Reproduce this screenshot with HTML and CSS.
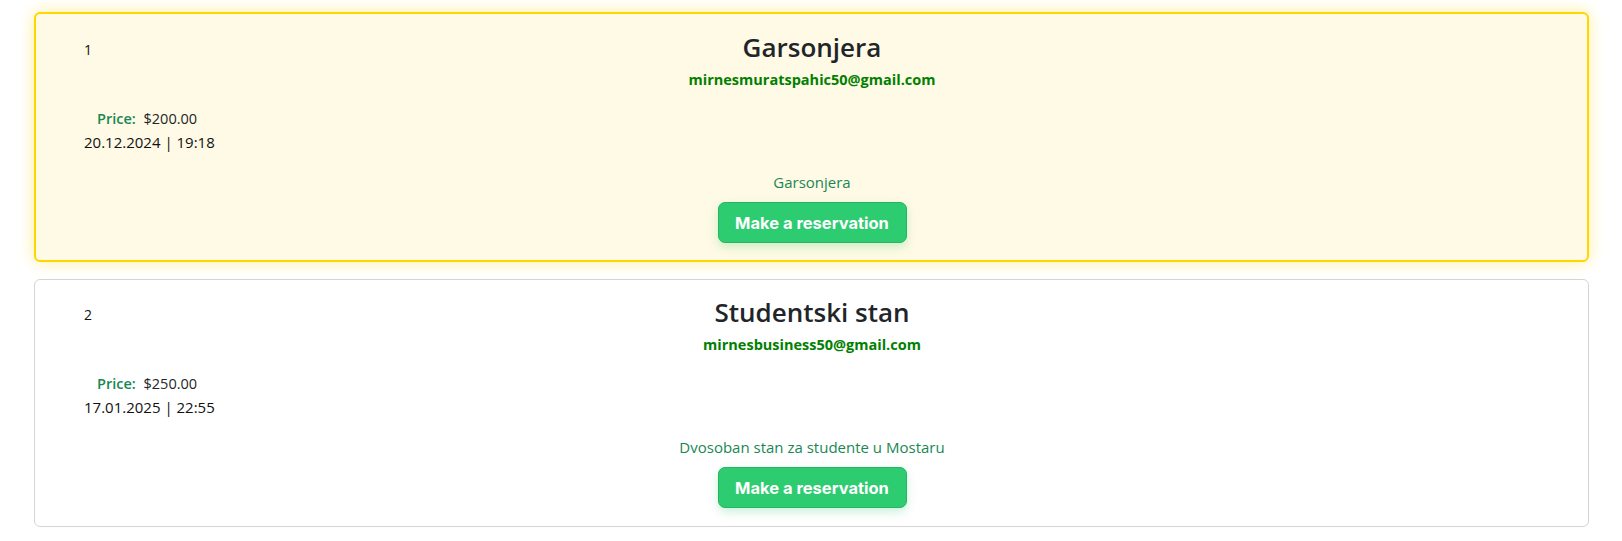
FILE: index.html
```html
<!DOCTYPE html>
<html lang="en">
<head>
<meta charset="utf-8">
<title>Apartments</title>
<link rel="stylesheet" href="styles.css">
</head>
<body>
<main class="list">
  <article class="card card-featured">
    <div class="card-top">
      <span class="num">1</span>
      <div class="heading">
        <h3 class="title">Garsonjera</h3>
        <p class="email">mirnesmuratspahic50@gmail.com</p>
      </div>
      <span class="spacer"></span>
    </div>
    <div class="meta">
      <p class="price"><span class="price-label">Price:</span> $200.00</p>
      <p class="date">20.12.2024 | 19:18</p>
    </div>
    <p class="desc">Garsonjera</p>
    <div class="actions"><button class="btn" type="button">Make a reservation</button></div>
  </article>
  <article class="card">
    <div class="card-top">
      <span class="num">2</span>
      <div class="heading">
        <h3 class="title">Studentski stan</h3>
        <p class="email">mirnesbusiness50@gmail.com</p>
      </div>
      <span class="spacer"></span>
    </div>
    <div class="meta">
      <p class="price"><span class="price-label">Price:</span> $250.00</p>
      <p class="date">17.01.2025 | 22:55</p>
    </div>
    <p class="desc">Dvosoban stan za studente u Mostaru</p>
    <div class="actions"><button class="btn" type="button">Make a reservation</button></div>
  </article>
</main>
</body>
</html>
```

FILE: styles.css
```css
* { box-sizing: border-box; }

html, body {
  margin: 0;
  padding: 0;
  background: #ffffff;
}

body {
  font-family: "Open Sans", "Liberation Sans", sans-serif;
  color: #212529;
  font-size: 15px;
}

p, h3 { margin: 0; }

.list {
  display: flex;
  flex-direction: column;
  gap: 17px;
  padding: 12px 33px 0 34px;
}

.card {
  border: 1px solid #d4d4d4;
  border-radius: 6px;
  background: #ffffff;
  padding: 15px 48px 18px 49px;
  display: flex;
  flex-direction: column;
}

.card-featured {
  border: 2px solid #ffd700;
  background: #fffae5;
  padding: 16px 47px 17px 48px;
  box-shadow: 0 0 16px rgba(255, 215, 0, 0.4);
}

.card-top {
  display: grid;
  grid-template-columns: 1fr auto 1fr;
  align-items: start;
}

.num {
  font-size: 14px;
  color: #111;
  padding-top: 10px;
  line-height: 20px;
}

.heading {
  display: flex;
  flex-direction: column;
  align-items: center;
}

.title {
  font-size: 26px;
  font-weight: 600;
  line-height: 34px;
  color: #212529;
}

.email {
  margin-top: 6px;
  font-size: 14.5px;
  font-weight: 700;
  color: #008000;
  line-height: 20px;
}

.meta {
  margin-top: 18px;
  display: flex;
  flex-direction: column;
}

.price {
  padding-left: 13px;
  line-height: 22px;
  font-size: 14.5px;
}

.price-label {
  color: #198754;
  font-weight: 600;
  margin-right: 4px;
}

.date {
  line-height: 24px;
  font-size: 15px;
  color: #111;
}

.desc {
  margin-top: 17px;
  text-align: center;
  color: #198754;
  line-height: 22px;
  font-size: 15px;
}

.actions {
  margin-top: 9px;
  display: flex;
  justify-content: center;
}

.btn {
  font-family: "Inter", "Open Sans", sans-serif;
  font-weight: 700;
  font-size: 16.5px;
  color: #ffffff;
  background: #2ecc71;
  border: 1px solid #27b463;
  border-radius: 7px;
  height: 41px;
  width: 189px;
  padding: 0;
  box-shadow: 0 4px 10px rgba(46, 204, 113, 0.25);
  cursor: pointer;
}
```
